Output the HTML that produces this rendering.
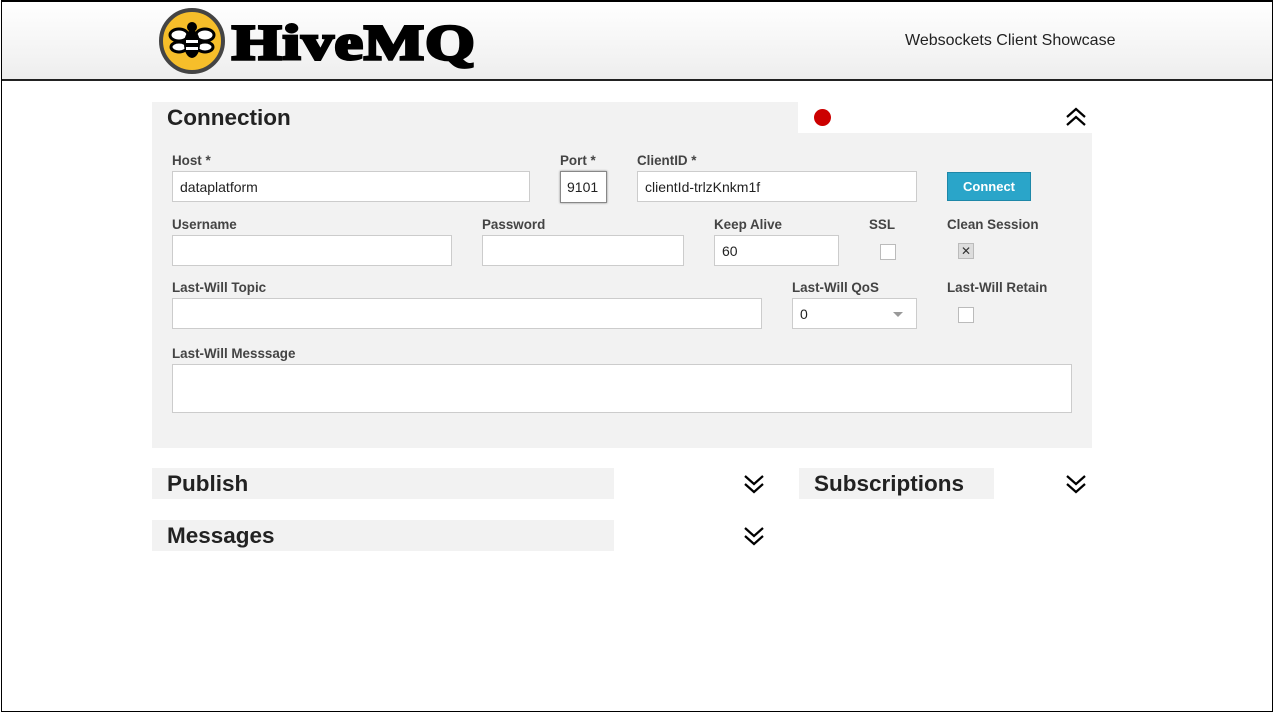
<!DOCTYPE html>
<html><head><style>
*{box-sizing:border-box;margin:0;padding:0}
body{width:1274px;height:713px;background:#fff;font-family:"Liberation Sans",sans-serif;position:relative;overflow:hidden}
.frame{position:absolute;left:1px;top:0;width:1272px;height:712px;border:1px solid #000;border-top:2px solid #000}
.hdr{position:absolute;left:2px;top:2px;width:1270px;height:79px;background:linear-gradient(#fff,#eee);border-bottom:2px solid #222}
.a{position:absolute}
.lbl{position:absolute;font-size:13.4px;font-weight:bold;color:#444}
.inp{position:absolute;background:#fff;border:1px solid #ccc;font-size:14px;color:#222;padding-left:7px;display:flex;align-items:center}
.cb{position:absolute;width:16px;height:16px;background:#fff;border:1px solid #bbb}
.h2{position:absolute;font-size:22.5px;font-weight:bold;color:#222}
.gray{position:absolute;background:#f2f2f2}
</style></head><body>
<div class="frame"></div>
<div class="hdr"></div>
<svg class="a" style="left:159px;top:8px" width="66" height="66" viewBox="0 0 66 66">
<circle cx="33" cy="33" r="31" fill="#f6be2a" stroke="#444" stroke-width="4"/>
<ellipse cx="20" cy="27" rx="9" ry="6" fill="#fff" stroke="#000" stroke-width="3"/>
<ellipse cx="46" cy="27" rx="9" ry="6" fill="#fff" stroke="#000" stroke-width="3"/>
<ellipse cx="20" cy="39" rx="8" ry="5" fill="#fff" stroke="#000" stroke-width="3"/>
<ellipse cx="46" cy="39" rx="8" ry="5" fill="#fff" stroke="#000" stroke-width="3"/>
<ellipse cx="33" cy="36" rx="8" ry="14" fill="#000"/>
<rect x="27" y="32" width="12" height="3" fill="#fff"/><rect x="27" y="39" width="12" height="3" fill="#fff"/>
<circle cx="33" cy="19" r="5" fill="#000"/>
</svg>
<div class="a" style="left:232px;top:14px;font-family:'Liberation Serif',serif;font-weight:900;font-size:50px;letter-spacing:1px;color:#000;-webkit-text-stroke:3px #000;line-height:56px;transform:scaleX(1.27);transform-origin:left top">HiveMQ</div>
<div class="a" style="left:905px;top:32px;font-size:16px;color:#222">Websockets Client Showcase</div>

<div class="gray" style="left:152px;top:102px;width:940px;height:346px"></div>
<div class="a" style="left:798px;top:102px;width:294px;height:31px;background:#fff"></div>
<div class="h2" style="left:167px;top:105px">Connection</div>
<div class="a" style="left:814px;top:109px;width:17px;height:17px;border-radius:50%;background:#c00"></div>
<svg class="a" style="left:1065px;top:107px" width="22" height="20" viewBox="0 0 22 20"><path d="M2 10 L11 2 L20 10 M2 18 L11 10 L20 18" fill="none" stroke="#000" stroke-width="2.2"/></svg>

<div class="lbl" style="left:172px;top:153px">Host *</div>
<div class="inp" style="left:172px;top:171px;width:358px;height:31px">dataplatform</div>
<div class="lbl" style="left:560px;top:153px">Port *</div>
<div class="inp" style="left:560px;top:171px;width:47px;height:32px;border-color:#888;box-shadow:0 0 2px #888;padding-left:6px">9101</div>
<div class="lbl" style="left:637px;top:153px">ClientID *</div>
<div class="inp" style="left:637px;top:171px;width:280px;height:31px">clientId-trlzKnkm1f</div>
<div class="a" style="left:947px;top:172px;width:84px;height:29px;background:#2aa5c9;border:1px solid #1e87a8;color:#fff;font-weight:bold;font-size:13px;text-align:center;line-height:27px">Connect</div>

<div class="lbl" style="left:172px;top:217px">Username</div>
<div class="inp" style="left:172px;top:235px;width:280px;height:31px"></div>
<div class="lbl" style="left:482px;top:217px">Password</div>
<div class="inp" style="left:482px;top:235px;width:202px;height:31px"></div>
<div class="lbl" style="left:714px;top:217px">Keep Alive</div>
<div class="inp" style="left:714px;top:235px;width:125px;height:31px">60</div>
<div class="lbl" style="left:869px;top:217px">SSL</div>
<div class="cb" style="left:880px;top:244px"></div>
<div class="lbl" style="left:947px;top:217px">Clean Session</div>
<div class="cb" style="left:958px;top:243px;background:#ddd;font-size:12px;line-height:14px;text-align:center;color:#333">✕</div>

<div class="lbl" style="left:172px;top:280px">Last-Will Topic</div>
<div class="inp" style="left:172px;top:298px;width:590px;height:31px"></div>
<div class="lbl" style="left:792px;top:280px">Last-Will QoS</div>
<div class="inp" style="left:792px;top:298px;width:125px;height:31px">0</div>
<div class="a" style="left:893px;top:312px;border-left:5px solid transparent;border-right:5px solid transparent;border-top:5px solid #999"></div>
<div class="lbl" style="left:947px;top:280px">Last-Will Retain</div>
<div class="cb" style="left:958px;top:307px"></div>

<div class="lbl" style="left:172px;top:346px">Last-Will Messsage</div>
<div class="inp" style="left:172px;top:364px;width:900px;height:49px"></div>

<div class="gray" style="left:152px;top:468px;width:462px;height:31px"></div>
<div class="h2" style="left:167px;top:471px">Publish</div>
<svg class="a" style="left:743px;top:474px" width="22" height="20" viewBox="0 0 22 20"><path d="M2 2 L11 10 L20 2 M2 10 L11 18 L20 10" fill="none" stroke="#000" stroke-width="2.2"/></svg>
<div class="gray" style="left:799px;top:468px;width:195px;height:31px"></div>
<div class="h2" style="left:814px;top:471px">Subscriptions</div>
<svg class="a" style="left:1065px;top:474px" width="22" height="20" viewBox="0 0 22 20"><path d="M2 2 L11 10 L20 2 M2 10 L11 18 L20 10" fill="none" stroke="#000" stroke-width="2.2"/></svg>
<div class="gray" style="left:152px;top:520px;width:462px;height:31px"></div>
<div class="h2" style="left:167px;top:523px">Messages</div>
<svg class="a" style="left:743px;top:526px" width="22" height="20" viewBox="0 0 22 20"><path d="M2 2 L11 10 L20 2 M2 10 L11 18 L20 10" fill="none" stroke="#000" stroke-width="2.2"/></svg>
</body></html>
